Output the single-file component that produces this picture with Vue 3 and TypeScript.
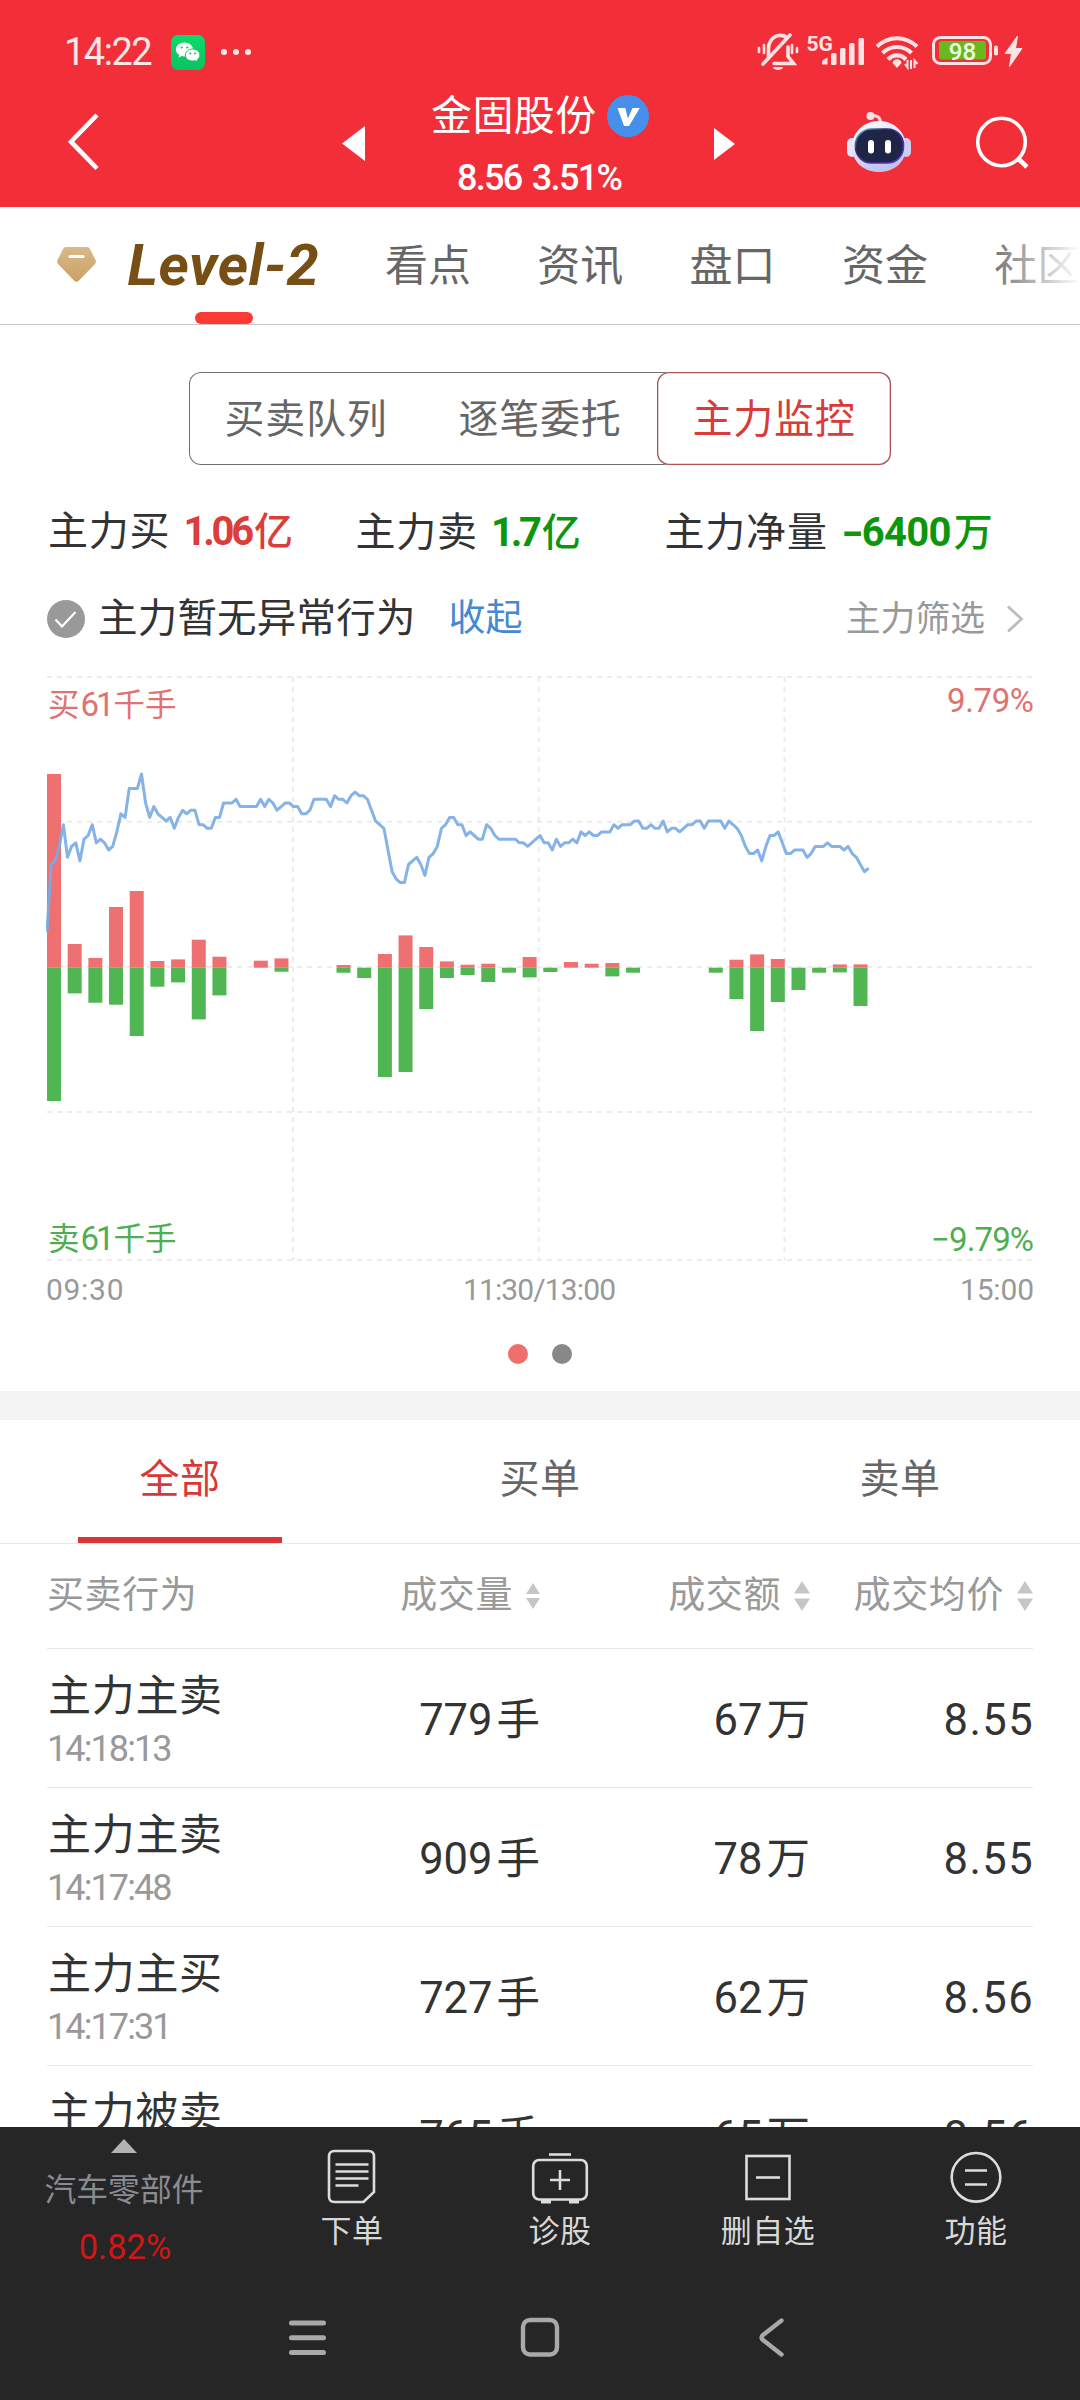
<script setup lang="ts">
interface Bar {
  slot: number
  buy: number
  sell: number
}

interface Trade {
  name: string
  time: string
  volume: string
  volumeUnit: string
  amount: string
  amountUnit: string
  price: string
}

const pageTabs: string[] = ['看点', '资讯', '盘口', '资金', '社区']

const trades: Trade[] = [
  { name: '主力主卖', time: '14:18:13', volume: '779', volumeUnit: '手', amount: '67', amountUnit: '万', price: '8.55' },
  { name: '主力主卖', time: '14:17:48', volume: '909', volumeUnit: '手', amount: '78', amountUnit: '万', price: '8.55' },
  { name: '主力主买', time: '14:17:31', volume: '727', volumeUnit: '手', amount: '62', amountUnit: '万', price: '8.56' },
  { name: '主力被卖', time: '', volume: '765', volumeUnit: '手', amount: '65', amountUnit: '万', price: '8.56' },
]

// Five-minute buckets: [buy, sell] heights in chart pixels.
const buckets: [number, number][] = [
  [193.7, 133.3], [23.7, 25.7], [9.7, 35], [60.7, 37], [76.7, 68.3], [6.7, 19], [8.3, 14.7], [28, 51.7],
  [11, 27.7], [0, 0], [7, 0], [9.3, 4], [0, 0], [0, 0], [2.7, 5], [0, 10.3],
  [13.7, 109.3], [32.3, 104.3], [20.7, 41.3], [6.3, 10.3], [3, 7.3], [4, 14.3], [0, 5], [10.7, 9.7],
  [0, 4.3], [5.7, 0], [4, 0], [4.7, 8.7], [0, 5], [0, 0], [0, 0], [0, 0],
  [0, 5], [8, 31.3], [13.3, 63.3], [8.7, 34.3], [0, 22.3], [0, 5], [3.3, 4.7], [3.3, 38.3],
]
const bars: Bar[] = buckets.map(([buy, sell], slot) => ({ slot, buy, sell }))
const barX = (slot: number): number => 1 + slot * 20.68
const ZERO = 291.7

// Per-minute price, counted in ticks below the day's high.
const ticks: number[] = [
  43.6, 25, 24, 20, 14, 23, 20, 19, 24, 18, 17, 14, 19, 18, 19, 21, 20, 16, 11, 12, 4, 4, 4, 0, 8, 12, 9, 11, 12, 13, 12,
  15, 12, 10, 11, 10, 10, 14, 14, 15, 15, 12, 12, 8, 8, 8, 7, 9, 9, 9, 9, 9, 7, 9, 7, 8, 10, 9, 8, 8, 9, 9, 11, 11, 10,
  7, 7, 7, 7, 9, 6, 7, 7, 8, 6, 5, 6, 6, 7, 10, 13, 14, 15, 21, 27, 29, 30, 30, 25, 24, 23, 25, 28, 23, 22, 20, 15, 14,
  12, 12, 14, 14, 17, 16, 17, 18, 18, 14, 15, 17, 18, 18, 18, 18, 18, 19, 19, 20, 19, 18, 17, 19, 19, 21, 18, 20, 19,
  19, 18, 19, 16, 17, 16, 17, 17, 16, 16, 16, 14, 15, 14, 14, 14, 13, 13, 15, 15, 14, 15, 15, 13, 16, 15, 15, 16, 15,
  14, 14, 13, 13, 15, 13, 13, 13, 13, 15, 13, 14, 15, 17, 20, 22, 22, 21, 24, 20, 17, 17, 16, 19, 22, 22, 21, 21, 21,
  23, 22, 20, 20, 20, 19, 20, 20, 20, 21, 20, 22, 23, 25, 27, 26,
]
const pricePoints: string = ticks
  .map((t, i) => `${(1 + i * 4.108).toFixed(1)},${(98 + t * 3.62).toFixed(1)}`)
  .join(' ')

const gridY: number[] = [0.9, 145.8, 290.9, 436, 584]
const gridX: number[] = [247, 492.7, 738.5]
</script>

<template>
  <div class="screen">
    <header class="top">
      <div class="status">
        <span class="clock">14:22</span>
        <svg class="wechat" width="34" height="35" viewBox="0 0 34 35">
          <defs>
            <linearGradient id="wx" x1="0" y1="0" x2="0" y2="1">
              <stop offset="0" stop-color="#09dc6b" />
              <stop offset="1" stop-color="#0cc161" />
            </linearGradient>
          </defs>
          <rect width="34" height="35" rx="7" fill="url(#wx)" />
          <path d="M13.5 7.5c-4.8 0-8.6 3-8.6 6.900 0 2.200 1.200 4.100 3.200 5.400l-.6 2.900 3.100-1.700c.9.2 1.900.4 2.900.4 4.700 0 8.500-3.100 8.500-7s-3.800-6.900-8.500-6.900z" fill="#fff" />
          <path d="M21.600 14c-4.100 0-7.300 2.700-7.300 6s3.200 6 7.300 6c.9 0 1.700-.1 2.500-.3l2.500 1.500-.4-2.500c1.700-1.100 2.700-2.800 2.700-4.700 0-3.300-3.200-6-7.300-6z" fill="#fff" stroke="#0bc964" stroke-width="1" />
          <circle cx="10.700" cy="12.500" r="1.100" fill="#0bc964" /><circle cx="16.300" cy="12.500" r="1.100" fill="#0bc964" />
          <circle cx="19.300" cy="18.400" r="1" fill="#0bc964" /><circle cx="24" cy="18.400" r="1" fill="#0bc964" />
        </svg>
        <span class="more"><i></i><i></i><i></i></span>
        <svg class="indicators" width="275" height="44" viewBox="755 30 275 44">
          <g fill="none" stroke="#ffe3e4" stroke-width="3.600" stroke-linecap="round">
            <path d="M768.500 57V49c0-7 4-12.500 10-13.500 4-.4 6.500.5 8.500 2" />
            <path d="M763 64l27-29" />
            <path d="M774 63.500h19.500l-5.500-7V47" />
            <path d="M759 48v4M764 45v8M792 45v8M797 48v4" stroke-width="2.600" />
          </g>
          <path d="M773 67h10a5 3 0 0 1-10 0z" fill="#ffe3e4" />
          <text x="806.500" y="50.500" class="fiveg">5G</text>
          <g fill="#ffe3e4">
            <path d="M822 62q0-2 2-2.500l3.500-2v7H823q-1 0-1-1z" />
            <rect x="831" y="53" width="5.500" height="12" rx="1.500" />
            <rect x="840" y="48" width="5.500" height="17" rx="1.500" />
            <rect x="849" y="43" width="5.500" height="22" rx="1.500" />
            <rect x="858.500" y="38" width="5.500" height="27" rx="1.500" />
          </g>
          <g fill="none" stroke="#ffe3e4" stroke-width="4.200">
            <path d="M877 46.500c12-11 28-11 40 0" />
            <path d="M882.500 53c8.500-8 20.500-8 29 0" />
            <path d="M888 59.500c5-5.500 13-5.500 18 0" />
            <path d="M907.500 60v7.500l-2.500-3.500M914.500 68v-7.500l3 3.500M911 60v9" stroke-width="2" />
          </g>
          <path d="M892.500 63a4.600 4.600 0 0 1 9 0l-4.500 5z" fill="#ffe3e4" />
          <rect x="933.500" y="37.500" width="57" height="26" rx="7" fill="none" stroke="#ffe3e4" stroke-width="3" />
          <rect x="939" y="41" width="47" height="18.500" rx="2.500" fill="#6ab820" />
          <text x="962.500" y="59.500" text-anchor="middle" class="level">98</text>
          <rect x="994" y="45.500" width="4" height="10" rx="1.800" fill="#ffe3e4" />
          <path d="M1017.500 36l-12.500 17.500h6.500l-2 13 12.500-18h-6.500z" fill="#ffe3e4" stroke="#ffe3e4" stroke-width="1" />
        </svg>
      </div>

      <div class="nav">
        <svg class="back" width="34" height="58" viewBox="0 0 34 58">
          <path d="M31 2L5 28.700 31 55.500" fill="none" stroke="#fff" stroke-width="4.600" />
        </svg>
        <svg class="prev" width="23" height="35" viewBox="0 0 23 35"><path d="M23 0v35L0 17.500z" fill="#fff" /></svg>
        <div class="title">
          <div class="name">
            <span>金固股份</span>
            <svg width="42" height="42" viewBox="0 0 42 42">
              <circle cx="21" cy="21" r="21" fill="#468fea" />
              <path d="M10.500 13h7.800l2.600 10.500L25.500 13h7.300L22 31h-5z" fill="#fff" />
            </svg>
          </div>
          <div class="quote">8.56 3.51%</div>
        </div>
        <svg class="next" width="21" height="32" viewBox="0 0 21 32"><path d="M0 0v32l21-16z" fill="#fff" /></svg>
        <svg class="robot" width="64" height="62" viewBox="0 0 64 62">
          <defs>
            <linearGradient id="shell" x1="0" y1="0" x2=".4" y2="1">
              <stop offset="0" stop-color="#ffffff" />
              <stop offset=".6" stop-color="#dcdcf8" />
              <stop offset="1" stop-color="#c3c4ee" />
            </linearGradient>
            <linearGradient id="rim" x1="0" y1="0" x2="1" y2="1">
              <stop offset="0" stop-color="#6bd3e8" />
              <stop offset=".3" stop-color="#343067" />
              <stop offset="1" stop-color="#5b35e0" />
            </linearGradient>
          </defs>
          <path d="M24 5c6-1 9 1 9.500 6" fill="none" stroke="#f3d9e4" stroke-width="3" />
          <circle cx="23.500" cy="5" r="4" fill="#f8dfe6" />
          <rect x="0" y="27" width="10" height="19" rx="5" fill="#e9e4fb" />
          <rect x="54" y="27" width="10" height="19" rx="5" fill="#cfccf3" />
          <path d="M32 10c15 0 27 11 27 26S47 61 32 61 5 51 5 36 17 10 32 10z" fill="url(#shell)" />
          <rect x="8.500" y="18" width="48" height="34" rx="16" fill="#1f2547" stroke="url(#rim)" stroke-width="1.600" />
          <rect x="21" y="29" width="6" height="13.500" rx="3" fill="#fff" />
          <rect x="38" y="29" width="6" height="13.500" rx="3" fill="#fff" />
        </svg>
        <svg class="search" width="56" height="58" viewBox="0 0 56 58">
          <circle cx="26.500" cy="27" r="23.800" fill="none" stroke="#fff" stroke-width="3.600" />
          <path d="M43.500 44l8.500 8" stroke="#fff" stroke-width="4.600" />
        </svg>
      </div>
    </header>

    <nav class="tabs">
      <svg class="gem" width="39" height="36" viewBox="0 0 39 36">
        <defs>
          <linearGradient id="gold" x1="0" y1="0" x2="0" y2="1">
            <stop offset="0" stop-color="#d9b98a" />
            <stop offset="1" stop-color="#cba066" />
          </linearGradient>
        </defs>
        <path d="M9 0h21q2 0 3 2l5.500 11q1 2-.5 4L22 33.500q-2.500 2.500-5 0L1 17q-1.500-2-.5-4L6 2q1-2 3-2z" fill="url(#gold)" />
        <path d="M13 9.500h13" stroke="#fff" stroke-width="3.200" stroke-linecap="round" />
      </svg>
      <div class="lead"><span>Level-2</span><i></i></div>
      <span v-for="tab in pageTabs" :key="tab" class="tab">{{ tab }}</span>
      <div class="fade"></div>
    </nav>

    <section class="monitor">
      <div class="segments">
        <span>买卖队列</span>
        <span>逐笔委托</span>
        <span class="on">主力监控</span>
      </div>

      <div class="totals">
        <div class="total t1">主力买<b class="up">1.06<em>亿</em></b></div>
        <div class="total t2">主力卖<b class="down">1.7<em>亿</em></b></div>
        <div class="total t3">主力净量<b class="down net"><u>-</u>6400<em>万</em></b></div>
      </div>

      <div class="notice">
        <svg width="38" height="38" viewBox="0 0 38 38">
          <circle cx="19" cy="19" r="19" fill="#999" />
          <path d="M8.500 19.500l6.500 7L28.500 12" fill="none" stroke="#fff" stroke-width="2.200" />
        </svg>
        <span class="msg">主力暂无异常行为</span>
        <span class="fold">收起</span>
        <span class="filter">主力筛选</span>
        <svg class="chev" width="18" height="28" viewBox="0 0 18 28">
          <path d="M2 1.500L15.500 14 2 26.500" fill="none" stroke="#bdbdbd" stroke-width="2.800" />
        </svg>
      </div>

      <svg class="chart" width="988" height="632" viewBox="0 0 988 632">
        <g stroke="#ececec" stroke-width="2" stroke-dasharray="5 5">
          <line v-for="y in gridY" :key="'h' + y" x1="1" x2="987" :y1="y" :y2="y" />
          <line v-for="x in gridX" :key="'v' + x" :x1="x" :x2="x" y1="1" y2="584" />
        </g>
        <g v-for="bar in bars" :key="bar.slot">
          <rect :x="barX(bar.slot)" :y="ZERO - bar.buy" width="14" :height="bar.buy" fill="#ef7070" />
          <rect :x="barX(bar.slot)" :y="ZERO" width="14" :height="bar.sell" fill="#4fb651" />
        </g>
        <polyline :points="pricePoints" fill="none" stroke="#78abe4" stroke-opacity=".9" stroke-width="3" stroke-linejoin="round" />
        <g class="hands up-ink">
          <text x="2" y="39.500">买</text><text class="num" x="34.500" y="39.500">61</text><text x="67.500" y="39.500" textLength="63">千手</text>
        </g>
        <g class="hands down-ink">
          <text x="2" y="574">卖</text><text class="num" x="34.500" y="574">61</text><text x="67.500" y="574" textLength="63">千手</text>
        </g>
        <text class="pct up-ink" x="901" y="36" textLength="87">9.79%</text>
        <text class="pct down-ink" x="885" y="575" textLength="103">−9.79%</text>
        <g class="axis">
          <text x="0" y="624" textLength="77.500">09:30</text>
          <text x="417" y="624" textLength="153">11:30/13:00</text>
          <text x="914" y="624" textLength="74">15:00</text>
        </g>
      </svg>

      <div class="pager"><i class="cur"></i><i></i></div>
    </section>

    <section class="orders">
      <div class="side">
        <span class="on">全部</span>
        <span>买单</span>
        <span>卖单</span>
      </div>
      <div class="grid head">
        <span>买卖行为</span>
        <span class="num-col">成交量<svg class="sort small" width="14" height="30" viewBox="0 0 14 30"><path d="M7 2l7 11H0zM7 28l7-11H0z" fill="#c6c6c6" /></svg></span>
        <span class="num-col">成交额<svg class="sort" width="16" height="30" viewBox="0 0 16 30"><path d="M8 0l8 12.500H0zM8 30l8-12.500H0z" fill="#c6c6c6" /></svg></span>
        <span class="num-col">成交均价<svg class="sort" width="16" height="30" viewBox="0 0 16 30"><path d="M8 0l8 12.500H0zM8 30l8-12.500H0z" fill="#c6c6c6" /></svg></span>
      </div>
      <div v-for="(trade, i) in trades" :key="i" class="grid row">
        <div class="who">
          <span class="act">{{ trade.name }}</span>
          <span v-if="trade.time" class="time">{{ trade.time }}</span>
        </div>
        <span class="num-col">{{ trade.volume }}<em>{{ trade.volumeUnit }}</em></span>
        <span class="num-col">{{ trade.amount }}<em>{{ trade.amountUnit }}</em></span>
        <span class="num-col price">{{ trade.price }}</span>
      </div>
    </section>

    <footer class="bottom">
      <div class="actions">
        <div class="sector">
          <svg width="26" height="14" viewBox="0 0 26 14"><path d="M13 0l13 14H0z" fill="#b3b3b3" /></svg>
          <span class="sector-name">汽车零部件</span>
          <span class="sector-pct">0.82%</span>
        </div>
        <div class="action">
          <svg width="60" height="56" viewBox="0 0 60 56" fill="none" stroke="#dcdcdc" stroke-width="2.600">
            <path d="M12.500 2h34q5.500 0 5.500 5.500v35.500L41.500 53h-29q-5.500 0-5.500-5.500v-40q0-5.500 5.500-5.500z" />
            <path d="M13.500 15.500h33M13.500 22.500h33M13.500 29.500h33M13.500 36.500h23" />
          </svg>
          <span>下单</span>
        </div>
        <div class="action">
          <svg width="60" height="56" viewBox="0 0 60 56" fill="none" stroke="#dcdcdc" stroke-width="2.600">
            <path d="M19 5.500h22" />
            <rect x="3.200" y="11" width="53.600" height="39.500" rx="6" />
            <path d="M30 21v20M20 31h20" />
            <path d="M11 52.500h10M39 52.500h10" stroke-width="4" />
          </svg>
          <span>诊股</span>
        </div>
        <div class="action">
          <svg width="60" height="56" viewBox="0 0 60 56" fill="none" stroke="#dcdcdc" stroke-width="2.600">
            <rect x="8.500" y="7" width="43" height="43" />
            <path d="M18 28.500h24" />
          </svg>
          <span>删自选</span>
        </div>
        <div class="action">
          <svg width="60" height="56" viewBox="0 0 60 56" fill="none" stroke="#dcdcdc" stroke-width="2.600">
            <circle cx="30" cy="28.300" r="24.300" />
            <path d="M19 21.500h22M19 35.500h22" />
          </svg>
          <span>功能</span>
        </div>
      </div>
      <div class="system">
        <svg width="40" height="44" viewBox="0 0 40 44"><path d="M3.500 7h32M3.500 21.700h32M3.500 36.400h32" stroke="#a9a9a9" stroke-width="5" stroke-linecap="round" /></svg>
        <svg width="40" height="44" viewBox="0 0 40 44"><rect x="3" y="4" width="34" height="34.500" rx="7" fill="none" stroke="#a9a9a9" stroke-width="4.400" /></svg>
        <svg width="40" height="44" viewBox="0 0 40 44"><path d="M29.500 4.500L11 19q-3 2.500 0 5l18.500 14.500" fill="none" stroke="#a9a9a9" stroke-width="4.400" stroke-linecap="round" stroke-linejoin="round" /></svg>
      </div>
    </footer>
  </div>
</template>

<style>
body {
  margin: 0;
  background: #fff;
}
</style>

<style scoped>
.screen {
  display: flex;
  flex-direction: column;
  width: 1080px;
  height: 2400px;
  overflow: hidden;
  background: #fff;
  color: #333;
  font-family: Roboto, "Noto Sans CJK SC", sans-serif;
}
svg {
  display: block;
  flex: none;
}
span,
div {
  white-space: nowrap;
}
i,
em,
u {
  font-style: normal;
  text-decoration: none;
}

.top {
  flex: none;
  height: 207px;
  background: #f22f38;
}
.status {
  display: flex;
  align-items: center;
  height: 103px;
  padding-left: 64px;
}
.clock {
  width: 107px;
  color: #ffe6e7;
  font-size: 38px;
  letter-spacing: -1.500px;
  line-height: 44px;
}
.wechat {
  margin-top: 1px;
}
.more {
  display: flex;
  gap: 6px;
  margin-left: 16px;
}
.more i {
  width: 6px;
  height: 6px;
  border-radius: 50%;
  background: #ffe6e7;
}
.indicators {
  margin-left: 504px;
  margin-top: 1px;
}
.fiveg {
  fill: #ffe3e4;
  font: 700 21px Roboto, sans-serif;
}
.level {
  fill: #f4ffe8;
  font: 500 24px Roboto, sans-serif;
}
.nav {
  display: flex;
  align-items: flex-start;
  height: 104px;
  padding-left: 66px;
}
.back {
  margin-top: 10px;
}
.prev {
  margin: 23px 0 0 242px;
}
.title {
  width: 250px;
  margin-left: 50px;
  color: #fff;
}
.name {
  display: flex;
  align-items: center;
  gap: 10px;
  height: 44px;
  margin: -9px 0 0 16px;
  font-size: 41px;
  line-height: 47px;
  letter-spacing: 0.400px;
}
.quote {
  margin: 18px 0 0 42px;
  font-size: 36px;
  font-weight: 500;
  line-height: 44px;
  letter-spacing: -1.700px;
  word-spacing: 3px;
}
.next {
  margin: 25px 0 0 49px;
}
.robot {
  margin: 8px 0 0 112px;
}
.search {
  margin: 12px 0 0 64px;
}

.tabs {
  position: relative;
  display: flex;
  flex: none;
  align-items: center;
  height: 117px;
  padding-left: 57px;
  overflow: hidden;
  border-bottom: 1px solid #c8c8c8;
}
.gem {
  margin-bottom: 1px;
}
.lead {
  display: flex;
  flex: none;
  flex-direction: column;
  align-items: center;
  width: 193px;
  height: 117px;
  margin: 0 35px 0 31px;
  color: #774f14;
  font-size: 58px;
  font-style: italic;
  font-weight: 700;
  line-height: 64px;
}
.lead span {
  margin-top: 26px;
  letter-spacing: 0.500px;
}
.lead i {
  width: 58px;
  height: 12px;
  margin-top: 15px;
  border-radius: 6px;
  background: #fb3a33;
}
.tab {
  width: 152.300px;
  flex: none;
  margin-top: 1px;
  padding-left: 30px;
  box-sizing: border-box;
  color: #666;
  font-size: 43px;
  line-height: 60px;
}
.fade {
  position: absolute;
  top: 0;
  right: 0;
  bottom: 0;
  width: 96px;
  background: linear-gradient(90deg, rgba(255, 255, 255, 0), #fff);
}

.monitor {
  display: flex;
  flex: none;
  flex-direction: column;
  height: 1066px;
}
.segments {
  display: flex;
  align-self: center;
  width: 702px;
  height: 93px;
  margin-top: 47px;
  box-sizing: border-box;
  box-shadow: inset 0 0 0 1px #707070;
  border-radius: 12px;
}
.segments span {
  width: 234px;
  color: #666;
  font-size: 40px;
  letter-spacing: 0.700px;
  line-height: 96px;
  text-align: center;
}
.segments .on {
  border-radius: 12px;
  background: #fff;
  box-shadow: inset 0 0 0 1.300px #b05054;
  color: #d93a3a;
}

.totals {
  display: flex;
  height: 60px;
  margin-top: 38px;
  padding-left: 48px;
  font-size: 40px;
  letter-spacing: 0.800px;
  line-height: 60px;
}
.total {
  display: flex;
}
.t1 {
  width: 307.500px;
  margin-top: -1px;
}
.t2 {
  width: 309px;
}
.total b {
  display: flex;
  margin-left: 13px;
  font-size: 40px;
  font-weight: 700;
  letter-spacing: -3.200px;
}
.total em {
  margin-left: 3px;
  font-size: 39px;
  font-weight: 500;
}
.total .net {
  letter-spacing: -0.700px;
}
.total u {
  width: 21px;
  transform: scaleX(1.500);
  transform-origin: 0 50%;
}
.up {
  color: #dc3c3a;
}
.down {
  color: #0c960c;
}

.notice {
  display: flex;
  align-items: center;
  height: 60px;
  margin-top: 26px;
  padding: 0 56px 0 47px;
  line-height: 62px;
}
.msg {
  margin-left: 13px;
  font-size: 39.500px;
  letter-spacing: 0.200px;
}
.fold {
  margin-left: 33px;
  color: #4489d2;
  font-size: 37px;
}
.filter {
  margin-left: auto;
  color: #999;
  font-size: 34.800px;
}
.chev {
  margin-left: 21px;
}

.chart {
  margin: 27px 0 0 46px;
}
.hands text {
  font: 31.500px "Noto Sans CJK SC", sans-serif;
}
.hands .num {
  font: 33px Roboto, sans-serif;
  letter-spacing: -3px;
}
.pct {
  font-size: 33px;
}
.up-ink {
  fill: #e07270;
}
.down-ink {
  fill: #50ae52;
}
.axis {
  fill: #999;
  font-size: 30px;
}
.pager {
  display: flex;
  justify-content: center;
  gap: 24px;
  margin-top: 36px;
}
.pager i {
  width: 20px;
  height: 20px;
  border-radius: 50%;
  background: #888;
}
.pager .cur {
  background: #ef6f6e;
}

.orders {
  flex: none;
  height: 707px;
  overflow: hidden;
  border-top: 29px solid #f4f4f4;
}
.side {
  display: flex;
  height: 123px;
  border-bottom: 1px solid #e8e8e8;
}
.side span {
  display: flex;
  flex: 1;
  flex-direction: column;
  align-items: center;
  height: 123px;
  color: #666;
  font-size: 40px;
  letter-spacing: 0.500px;
  line-height: 120px;
}
.side .on {
  color: #d93838;
}
.side .on::after {
  width: 204px;
  height: 6px;
  margin-top: -3px;
  background: #dc3535;
  content: "";
}
.grid {
  display: grid;
  grid-template-columns: 220px 273px 270px 223px;
  align-items: center;
  margin: 0 47px;
  border-bottom: 1px solid #e8e8e8;
}
.num-col {
  display: flex;
  justify-content: flex-end;
  align-items: center;
}
.head {
  height: 104px;
  color: #999;
  font-size: 37px;
  letter-spacing: 0.600px;
  line-height: 54px;
}
.head span {
  margin-top: -1px;
}
.sort {
  margin-left: 13px;
}
.row {
  height: 138px;
  font-size: 43.500px;
  line-height: 56px;
}
.row .num-col {
  padding-top: 5px;
}
.row .price {
  letter-spacing: 1.400px;
  margin-right: -1px;
}
.row em {
  margin-left: 4px;
}
.who {
  display: flex;
  flex-direction: column;
  height: 138px;
}
.act {
  margin-top: 19px;
  padding-left: 1px;
  font-size: 43px;
  letter-spacing: 0.700px;
}
.time {
  margin-top: 4px;
  color: #999;
  font-size: 36px;
  letter-spacing: -1.900px;
  line-height: 42px;
}

.bottom {
  flex: none;
  height: 273px;
  background: #262626;
}
.actions {
  display: flex;
  height: 150px;
}
.sector {
  display: flex;
  flex-direction: column;
  align-items: center;
  width: 248px;
}
.sector svg {
  margin-top: 12px;
}
.sector-name {
  margin-top: 17px;
  color: #8b8b92;
  font-size: 31.800px;
  line-height: 40px;
}
.sector-pct {
  margin: 15px 0 0 2px;
  color: #d01616;
  font-size: 34.500px;
  line-height: 44px;
}
.action {
  display: flex;
  flex-direction: column;
  align-items: center;
  width: 208px;
  color: #d8d8d8;
  font-size: 31px;
  line-height: 40px;
}
.action svg {
  margin-top: 22px;
}
.action span {
  margin-top: 7px;
  letter-spacing: 0.500px;
}
.system {
  display: flex;
  justify-content: center;
  gap: 192px;
  padding-top: 39px;
}
</style>
